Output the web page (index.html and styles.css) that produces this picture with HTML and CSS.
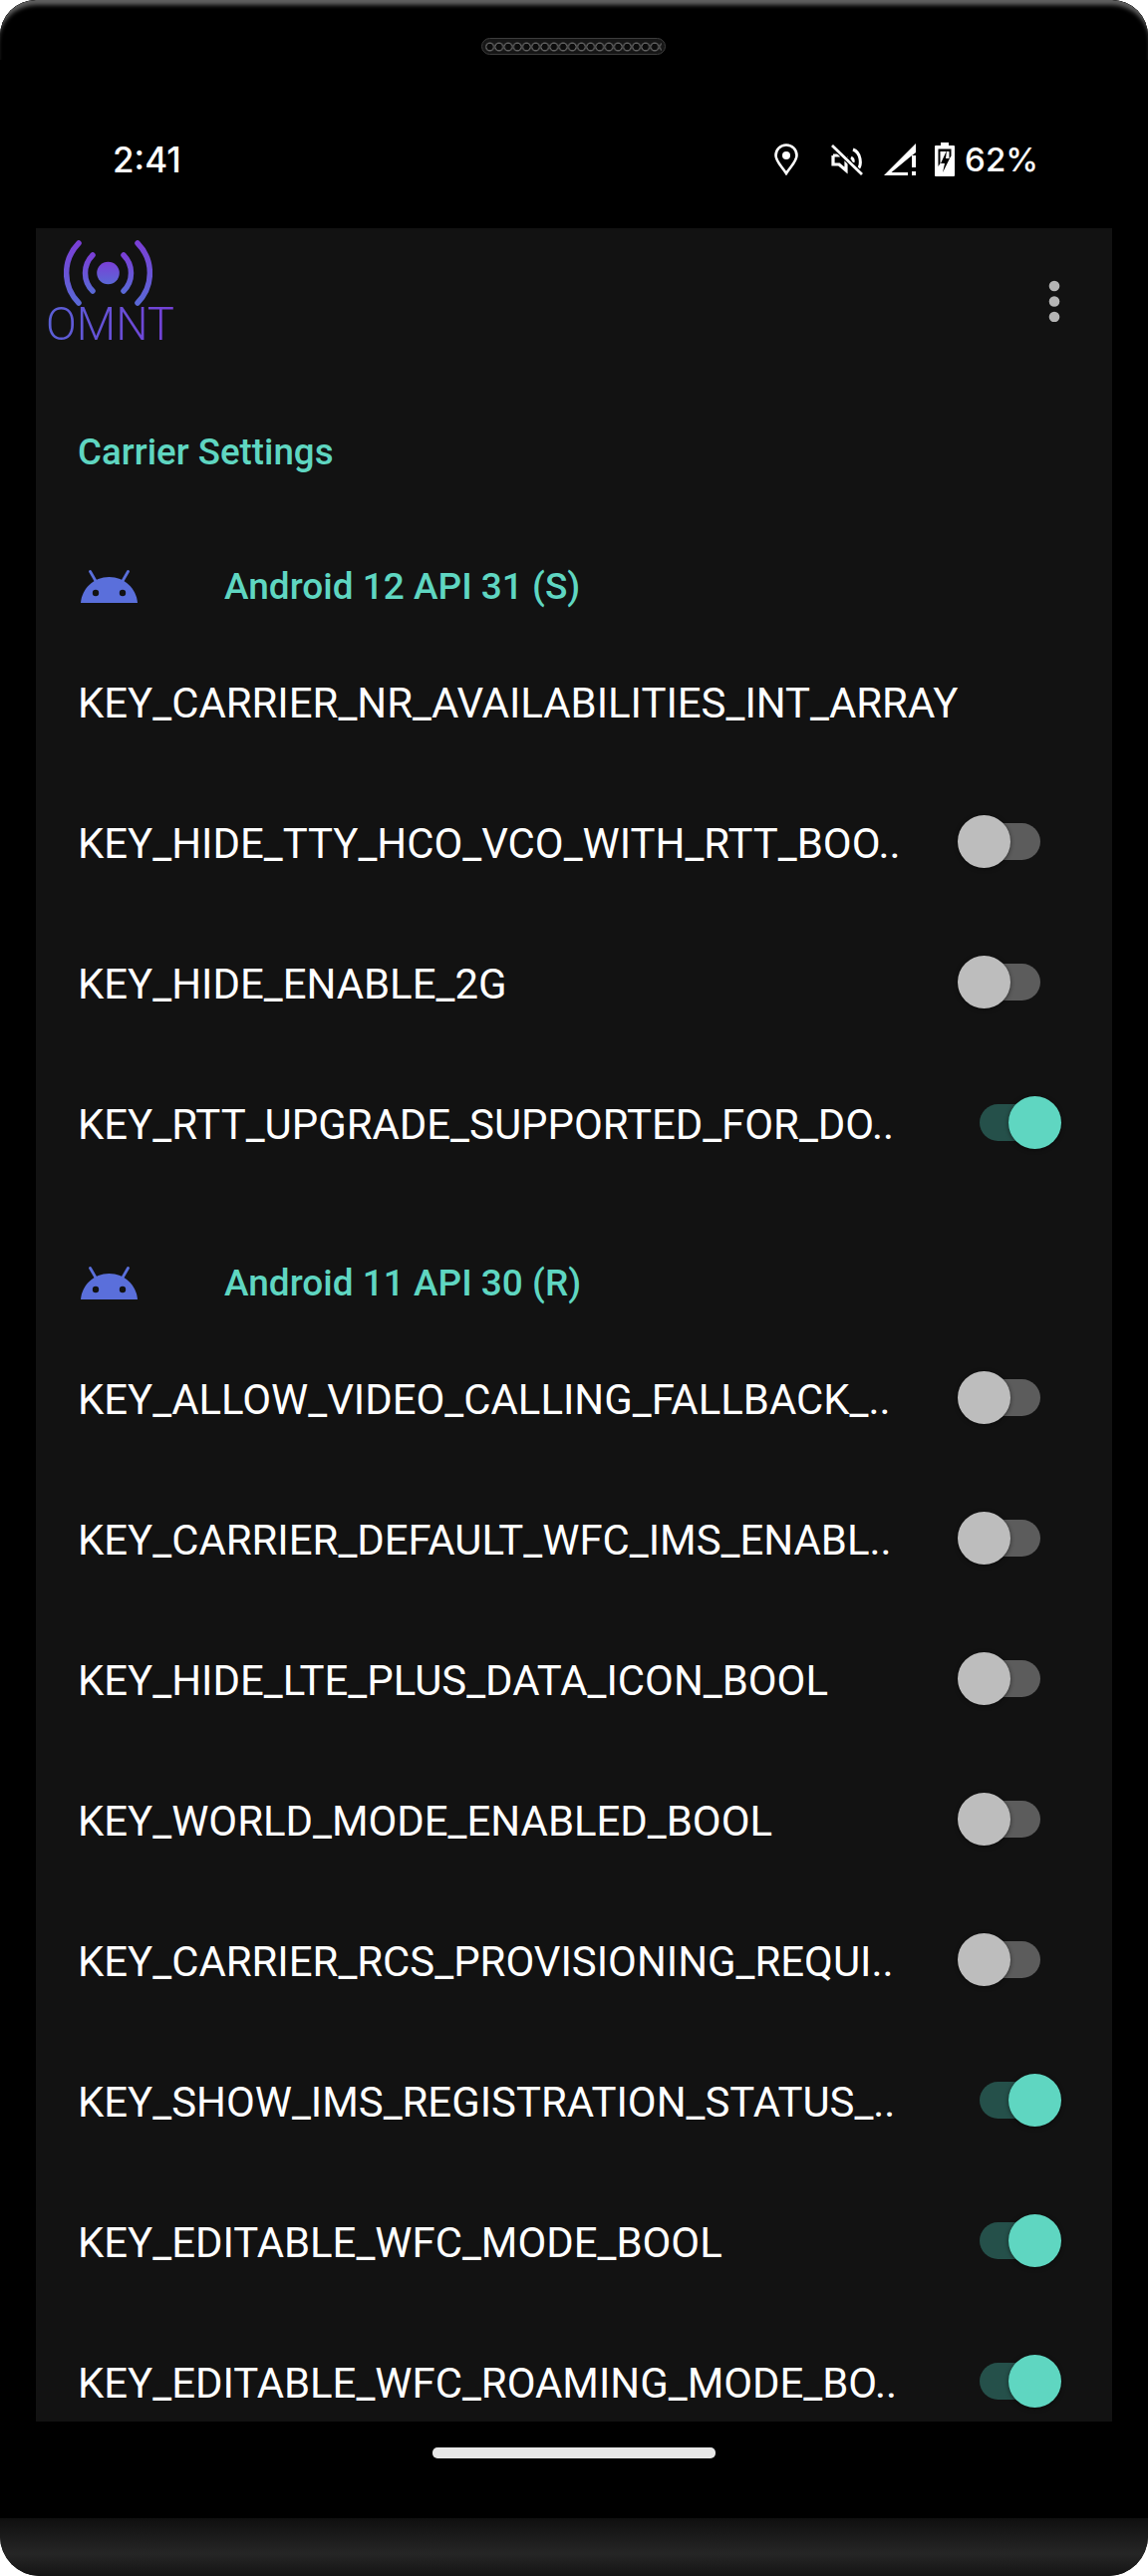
FILE: index.html
```html
<!DOCTYPE html>
<html lang="en">
<head>
<meta charset="utf-8">
<title>OMNT Carrier Settings</title>
<link rel="stylesheet" href="styles.css">
</head>
<body>
<div class="phone">
  <div class="bezel-top">
    <div class="speaker"><span class="holes"></span></div>
    <div class="status">
      <span class="time">2:41</span>
      <div class="status-right">
        <svg class="si si-loc" viewBox="0 0 24 32"><path d="M12 1.500C5.800 1.500 1.500 6.300 1.500 12c0 6 6.500 11.500 10.500 18 4-6.500 10.500-12 10.500-18C22.500 6.300 18.200 1.500 12 1.500z" fill="none" stroke="#fff" stroke-width="2.6"/><circle cx="12" cy="12" r="4" fill="#fff"/></svg>
        <svg class="si si-mute" viewBox="0 0 32 31"><path d="M2 11h6l3-3M15 12v14l-7-6H2v-9" fill="none" stroke="#fff" stroke-width="3.200"/><path d="M22 5c8 3 9 15 5 20" fill="none" stroke="#fff" stroke-width="3"/><path d="M20 13c2 1 2.500 3 2 5" fill="none" stroke="#fff" stroke-width="3"/><path d="M1 1l30 29" stroke="#000" stroke-width="5"/><path d="M1 1l30 29" stroke="#fff" stroke-width="2.800"/></svg>
        <svg class="si si-sig" viewBox="0 0 32 32"><path d="M0 32L32 0v9l-7 5.500L7.500 29H24v3z" fill="#fff"/><rect x="28" y="12" width="4" height="12" fill="#fff"/><rect x="28" y="28" width="4" height="4" fill="#fff"/></svg>
        <svg class="si si-bat" viewBox="0 0 20 34"><path d="M6 0h8v3h5a1 1 0 0 1 1 1v29a1 1 0 0 1-1 1H1a1 1 0 0 1-1-1V4a1 1 0 0 1 1-1h5z" fill="#fff"/><path d="M3.500 6.500h13v7l-2 3V9h-9v12l-2 3z" fill="#000"/><path d="M12 8l-6 13h4l-2 9 7-14h-4z" fill="#000"/></svg>
        <span class="pct">62%</span>
      </div>
    </div>
  </div>

  <main class="screen">
    <header class="appbar">
      <div class="logo">
        <svg class="logo-mark" viewBox="0 0 89 66">
          <defs><linearGradient id="lg" x1="0" y1="0" x2="0" y2="1"><stop offset="0" stop-color="#7a3fd6"/><stop offset="1" stop-color="#5a68d6"/></linearGradient></defs>
          <g fill="none" stroke="url(#lg)" stroke-width="5.500" stroke-linecap="round">
            <path d="M15 3C-1.500 20 -1.500 46 15 63"/>
            <path d="M29 15C19 25 19 41 29 51"/>
            <path d="M60 15C70 25 70 41 60 51"/>
            <path d="M74 3C90.500 20 90.500 46 74 63"/>
          </g>
          <circle cx="44.500" cy="33" r="11.300" fill="url(#lg)"/>
        </svg>
        <span class="logo-text">OMNT</span>
      </div>
      <svg class="menu" viewBox="0 0 12 42"><circle cx="6" cy="6" r="5.300"/><circle cx="6" cy="21.500" r="5.300"/><circle cx="6" cy="37" r="5.300"/></svg>
    </header>

    <h1 class="title">Carrier Settings</h1>

    <section class="group">
      <h2 class="group-head"><svg class="droid" viewBox="0 0 57 33"><path d="M0 33C1 19 13 7 28.500 7S56 19 57 33z" fill="#5a6fdb"/><path d="M15 11L9.500 1.500M42 11l5.500-9.500" stroke="#5a6fdb" stroke-width="2.800" stroke-linecap="round"/><circle cx="15" cy="23" r="3.200" fill="#121212"/><circle cx="42" cy="23" r="3.200" fill="#121212"/></svg><span>Android 12 API 31 (S)</span></h2>
      <div class="row"><span class="key">KEY_CARRIER_NR_AVAILABILITIES_INT_ARRAY</span></div>
      <div class="row"><span class="key">KEY_HIDE_TTY_HCO_VCO_WITH_RTT_BOO..</span><span class="sw"></span></div>
      <div class="row"><span class="key">KEY_HIDE_ENABLE_2G</span><span class="sw"></span></div>
      <div class="row"><span class="key">KEY_RTT_UPGRADE_SUPPORTED_FOR_DO..</span><span class="sw on"></span></div>
    </section>

    <section class="group">
      <h2 class="group-head"><svg class="droid" viewBox="0 0 57 33"><path d="M0 33C1 19 13 7 28.500 7S56 19 57 33z" fill="#5a6fdb"/><path d="M15 11L9.500 1.500M42 11l5.500-9.500" stroke="#5a6fdb" stroke-width="2.800" stroke-linecap="round"/><circle cx="15" cy="23" r="3.200" fill="#121212"/><circle cx="42" cy="23" r="3.200" fill="#121212"/></svg><span>Android 11 API 30 (R)</span></h2>
      <div class="row"><span class="key">KEY_ALLOW_VIDEO_CALLING_FALLBACK_..</span><span class="sw"></span></div>
      <div class="row"><span class="key">KEY_CARRIER_DEFAULT_WFC_IMS_ENABL..</span><span class="sw"></span></div>
      <div class="row"><span class="key">KEY_HIDE_LTE_PLUS_DATA_ICON_BOOL</span><span class="sw"></span></div>
      <div class="row"><span class="key">KEY_WORLD_MODE_ENABLED_BOOL</span><span class="sw"></span></div>
      <div class="row"><span class="key">KEY_CARRIER_RCS_PROVISIONING_REQUI..</span><span class="sw"></span></div>
      <div class="row"><span class="key">KEY_SHOW_IMS_REGISTRATION_STATUS_..</span><span class="sw on"></span></div>
      <div class="row"><span class="key">KEY_EDITABLE_WFC_MODE_BOOL</span><span class="sw on"></span></div>
      <div class="row"><span class="key">KEY_EDITABLE_WFC_ROAMING_MODE_BO..</span><span class="sw on"></span></div>
    </section>
  </main>

  <div class="nav"><span class="home"></span></div>
  <div class="chin"></div>
</div>
</body>
</html>
```

FILE: styles.css
```css
* { box-sizing: border-box; }
html, body { margin: 0; padding: 0; background: #fff; }
body { font-family: Roboto, "Noto Sans", sans-serif; }

.phone {
  width: 1152px;
  height: 2585px;
  background: #000;
  display: flex;
  flex-direction: column;
  position: relative;
  overflow: hidden;
  border-radius: 36px 36px 40px 40px;
}

.bezel-top {
  height: 229px;
  position: relative;
  flex: none;
  background: #000;
  padding-top: 122px;
}
.bezel-top::before {
  content: "";
  position: absolute;
  left: 0;
  right: 0;
  top: 0;
  height: 60px;
  border-radius: 36px 36px 0 0;
  box-shadow: inset 0 7px 4px -2px #606060;
}

.speaker {
  position: absolute;
  left: 483px;
  top: 38px;
  width: 185px;
  height: 17px;
  border-radius: 9px;
  background: #161616;
  border: 1px solid #3c3c3c;
  display: flex;
  align-items: center;
  padding: 0 3px;
}
.holes {
  display: block;
  width: 100%;
  height: 10px;
  background-image: radial-gradient(circle at 50% 50%, #0c0c0c 3px, #6a6a6a 3.6px, #444 4.4px, transparent 5px);
  background-size: 9.2px 10px;
  background-repeat: repeat-x;
}

.status {
  height: 76px;
  display: flex;
  align-items: center;
  justify-content: space-between;
  padding: 0 110px 0 113px;
  position: relative;
  color: #fff;
  font-family: Inter, Roboto, sans-serif;
}
.time { font-size: 35px; font-weight: 500; line-height: 76px; }
.status-right { display: flex; align-items: center; }
.si { display: block; flex: none; }
.si-loc { width: 24px; height: 32px; margin-right: 33px; }
.si-mute { width: 32px; height: 31px; margin-right: 21px; }
.si-sig { width: 32px; height: 32px; margin-right: 19px; }
.si-bat { width: 20px; height: 34px; margin-right: 10px; }
.pct { font-size: 33px; font-weight: 500; white-space: nowrap; }

.screen {
  height: 2201px;
  margin: 0 36px;
  background: #121212;
  overflow: hidden;
  flex: none;
}

.appbar {
  height: 147px;
  position: relative;
  padding-left: 11px;
}
.logo { width: 127px; padding-top: 12px; display: flex; flex-direction: column; align-items: center; }
.logo-mark { width: 89px; height: 66px; display: block; margin-right: 4px; flex: none; }
.logo-text {
  font-size: 45.5px;
  line-height: 44px;
  margin-top: -3px;
  font-weight: 300;
  color: transparent;
  background: linear-gradient(90deg, #5a60d6, #7440d6);
  -webkit-background-clip: text;
  background-clip: text;
}
.menu { position: absolute; left: 1016px; top: 52px; width: 12px; height: 42px; fill: #b5b5b5; }

.title {
  margin: 0 0 0 42px;
  height: 167px;
  padding-top: 57px;
  font-size: 36.7px;
  line-height: 42px;
  font-weight: 500;
  color: #5fd6c1;
}

.group + .group { margin-top: 45px; }

.group-head {
  margin: 0;
  height: 90px;
  display: flex;
  align-items: center;
  padding-left: 45px;
  font-size: 37px;
  font-weight: 500;
  color: #5fd6c1;
}
.droid { width: 57px; height: 33px; margin-right: 87px; flex: none; }

.row {
  height: 141px;
  display: flex;
  align-items: center;
  justify-content: space-between;
  padding: 0 51px 0 42px;
}
.key { font-size: 41.9px; color: #fff; white-space: nowrap; padding-top: 3px; }

.sw {
  display: block;
  width: 61px;
  height: 37px;
  border-radius: 19px;
  background: #5c5c5c;
  position: relative;
  margin-right: 21px;
  flex: none;
}
.sw::after {
  content: "";
  position: absolute;
  left: -22px;
  top: -8px;
  width: 53px;
  height: 53px;
  border-radius: 50%;
  background: #bdbdbd;
  box-shadow: 0 1px 4px rgba(0,0,0,.5);
}
.sw.on { background: #25504a; }
.sw.on::after { left: 29px; background: #5fd6c1; }

.nav {
  height: 97px;
  padding-top: 26px;
  display: flex;
  justify-content: center;
  flex: none;
}
.home { display: block; width: 284px; height: 11px; border-radius: 5px; background: #e8e8e8; }

.chin {
  flex: 1;
  background: linear-gradient(#0f0f0f, #262626 62%, #141414);
}
```
